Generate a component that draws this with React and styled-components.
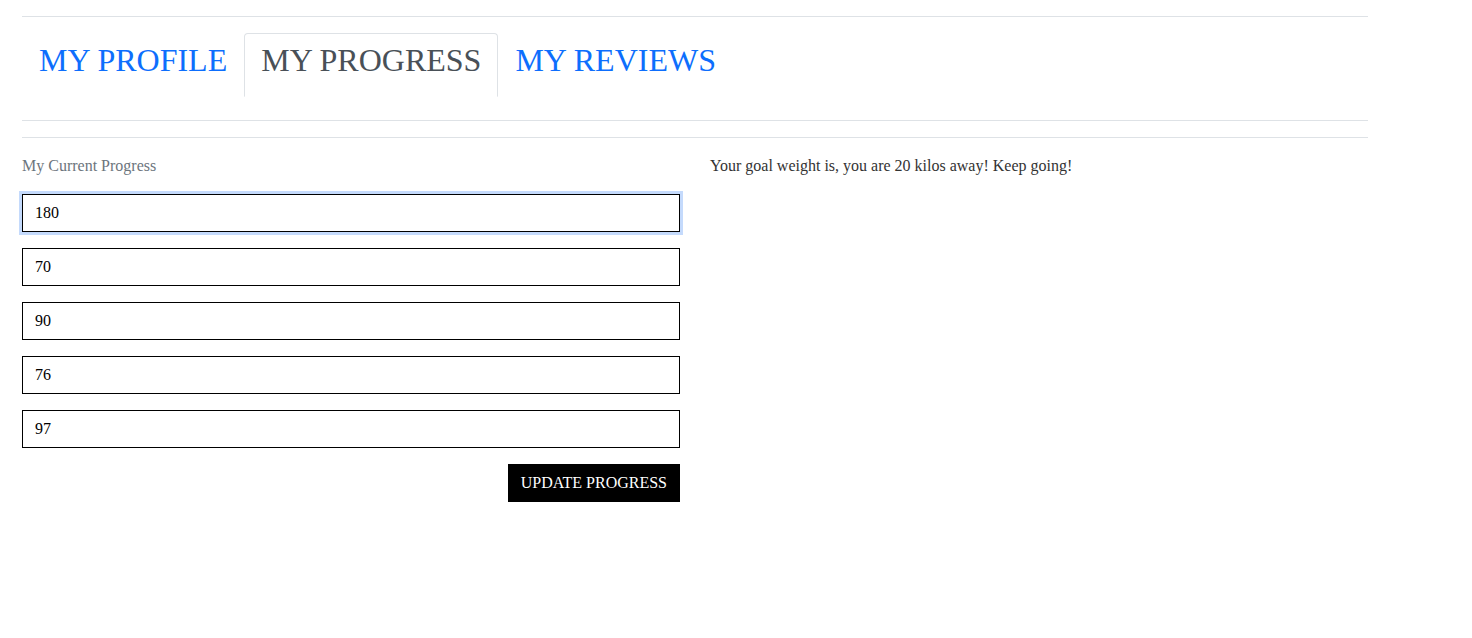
import React from "react";
import styled, { createGlobalStyle } from "styled-components";

const GlobalStyle = createGlobalStyle`
  html, body {
    margin: 0;
    padding: 0;
    background: #fff;
  }
  body {
    font-family: "Liberation Serif", "Times New Roman", serif;
    font-size: 16px;
    line-height: 1.5;
    color: #212529;
  }
  * {
    box-sizing: border-box;
  }
`;

const Page = styled.div`
  width: 1346px;
  margin-left: 22px;
  padding-top: 16px;
`;

const Rule = styled.div`
  border-top: 1px solid #dee2e6;
  margin-bottom: ${(p) => p.$after || 0}px;
`;

const Tabs = styled.nav`
  display: flex;
  margin-bottom: 23px;
`;

const Tab = styled.a`
  display: block;
  padding: 2px 16px 12px;
  font-size: 32px;
  line-height: 48px;
  color: ${(p) => (p.$active ? "#495057" : "#0d6efd")};
  text-decoration: none;
  cursor: pointer;
  border: 1px solid ${(p) => (p.$active ? "#dee2e6" : "transparent")};
  border-bottom-color: transparent;
  border-radius: 4px 4px 0 0;
`;

const Row = styled.div`
  display: grid;
  grid-template-columns: 658px 658px;
  column-gap: 30px;
`;

const Column = styled.div`
  display: flex;
  flex-direction: column;
`;

const Label = styled.div`
  color: #6c757d;
  margin-bottom: 16px;
`;

const Field = styled.input`
  width: 100%;
  height: 38px;
  margin: 0 0 16px;
  padding: 0 12px;
  border: 1px solid #000;
  border-radius: 0;
  font-family: "Liberation Serif", "Times New Roman", serif;
  font-size: 16px;
  color: #000;
  background: #fff;
  outline: none;
  box-shadow: ${(p) => (p.$focused ? "0 0 0 3px #c4dafc" : "none")};
`;

const Actions = styled.div`
  display: flex;
  justify-content: flex-end;
`;

const Button = styled.button`
  height: 38px;
  padding: 0 13px;
  border: none;
  border-radius: 0;
  background: #000;
  color: #fff;
  font-family: "Liberation Serif", "Times New Roman", serif;
  font-size: 16px;
  cursor: pointer;
`;

const Message = styled.p`
  margin: 0;
  color: #333;
`;

const values = ["180", "70", "90", "76", "97"];

export default function App() {
  return (
    <>
      <GlobalStyle />
      <Page>
        <Rule $after={16} />
        <Tabs>
          <Tab>MY PROFILE</Tab>
          <Tab $active>MY PROGRESS</Tab>
          <Tab>MY REVIEWS</Tab>
        </Tabs>
        <Rule $after={16} />
        <Rule $after={16} />
        <Row>
          <Column>
            <Label>My Current Progress</Label>
            {values.map((v, i) => (
              <Field key={i} defaultValue={v} $focused={i === 0} />
            ))}
            <Actions>
              <Button>UPDATE PROGRESS</Button>
            </Actions>
          </Column>
          <Column>
            <Message>
              Your goal weight is, you are 20 kilos away! Keep going!
            </Message>
          </Column>
        </Row>
      </Page>
    </>
  );
}
